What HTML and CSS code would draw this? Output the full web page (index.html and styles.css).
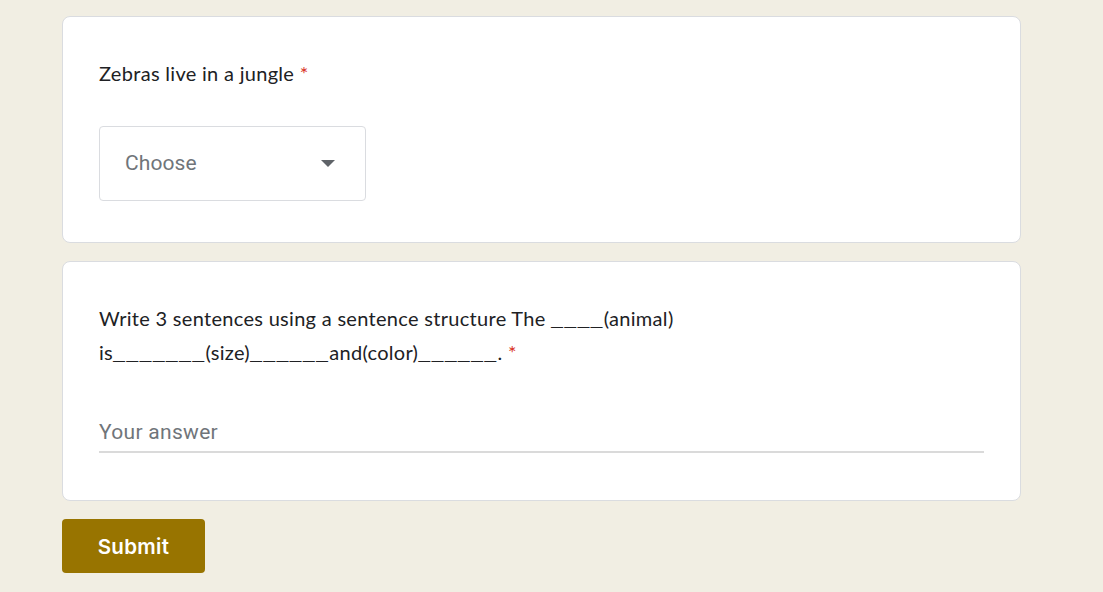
FILE: index.html
```html
<!DOCTYPE html>
<html>
<head>
<meta charset="utf-8">
<link rel="stylesheet" href="styles.css">
</head>
<body>
<main class="form">
  <section class="card card-choice">
    <div class="question">Zebras live in a jungle <span class="req">*</span></div>
    <div class="select">
      <span class="select-text">Choose</span>
      <svg class="arrow" width="16" height="8" viewBox="0 0 16 8"><path d="M1 0 L15 0 L8 7 Z" fill="#5f6368"/></svg>
    </div>
  </section>
  <section class="card card-text">
    <div class="question">Write 3 sentences using a sentence structure The <span class="blank">____</span>(animal)<br>is<span class="blank">_______</span>(size)<span class="blank">______</span>and(color)<span class="blank">______</span>. <span class="req">*</span></div>
    <div class="answer">Your answer</div>
  </section>
  <div class="actions">
    <button class="submit">Submit</button>
  </div>
</main>
</body>
</html>
```
FILE: styles.css
```css
html, body {
  margin: 0;
  padding: 0;
  background: #f1eee3;
}
.form {
  width: 959px;
  margin-left: 62px;
  padding-top: 16px;
  display: flex;
  flex-direction: column;
  gap: 18px;
}
.card {
  background: #fff;
  border: 1px solid #dadce0;
  border-radius: 8px;
  padding: 39px 36px 0 36px;
  box-sizing: border-box;
}
.card-choice {
  height: 227px;
}
.card-text {
  height: 240px;
}
.question {
  font-family: "Lato", "Noto Sans", sans-serif;
  font-size: 20px;
  line-height: 34px;
  color: #202124;
  letter-spacing: 0.3px;
}
.blank {
  font-family: "Liberation Mono", monospace;
  font-size: 20px;
  line-height: 0;
  letter-spacing: 1.2px;
}
.req {
  color: #d93025;
}
.select {
  margin-top: 36px;
  width: 267px;
  height: 75px;
  box-sizing: border-box;
  border: 1px solid #dadce0;
  border-radius: 4px;
  display: flex;
  align-items: center;
  justify-content: space-between;
  padding: 0 29px 0 25px;
}
.select-text {
  font-family: "Roboto", sans-serif;
  font-size: 21px;
  letter-spacing: 0.1px;
  color: #70757a;
  position: relative;
  top: -1px;
}
.arrow {
  display: block;
}
.answer {
  margin-top: 47px;
  height: 37px;
  box-sizing: border-box;
  border-bottom: 2px solid #dadada;
  font-family: "Roboto", sans-serif;
  font-size: 21px;
  letter-spacing: 0.3px;
  color: #70757a;
  line-height: 32px;
  width: 885px;
}
.actions {
  display: flex;
}
.submit {
  width: 143px;
  height: 54px;
  background: #987400;
  color: #fff;
  border: none;
  border-radius: 4px;
  font-family: "Inter", "Roboto", sans-serif;
  font-weight: 600;
  font-size: 20.5px;
  letter-spacing: 0.3px;
}
```
